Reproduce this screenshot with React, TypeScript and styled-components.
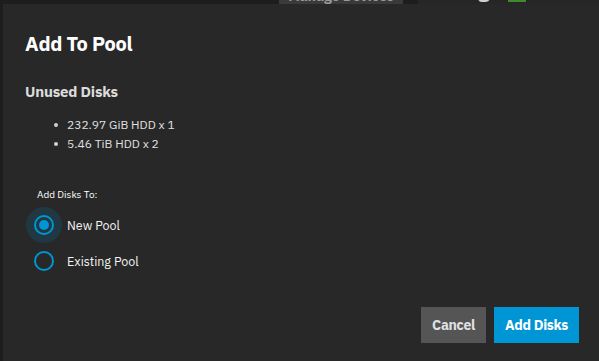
import React from "react";
import styled, { createGlobalStyle } from "styled-components";

const Global = createGlobalStyle`
  html, body { margin: 0; padding: 0; background: #1d1d1d; overflow: hidden; }
  body { font-family: "IBM Plex Sans", "Noto Sans", "Open Sans", sans-serif; }
  #root { width: 599px; height: 361px; }
`;

const Page = styled.div`
  position: relative;
  width: 599px;
  height: 361px;
  background: #1d1d1d;
  overflow: hidden;
`;

const PageHeader = styled.div`
  display: flex;
  align-items: flex-end;
  height: 4px;
  overflow: hidden;
  padding-left: 279px;
`;

const HeaderButton = styled.div`
  flex: none;
  width: 124px;
  height: 24px;
  margin-top: -20px;
  background: #3a3a3a;
  color: #9a9a9a;
  font-size: 14px;
  font-weight: 700;
  display: flex;
  align-items: flex-end;
  justify-content: center;
  line-height: 16px;
`;

const HeaderCard = styled.div`
  flex: none;
  margin-left: 15px;
  width: 181px;
  height: 30px;
  margin-top: -26px;
  background: #262626;
  display: flex;
  align-items: flex-end;
  gap: 7px;
  padding-left: 25px;
`;

const HeaderTitle = styled.div`
  color: #cfcfcf;
  font-size: 20px;
  font-weight: 700;
  line-height: 26px;
`;

const HeaderCheck = styled.div`
  width: 18px;
  height: 18px;
  background: #3e8a2c;
  margin-bottom: 2px;
`;

const Dialog = styled.div`
  position: absolute;
  top: 4px;
  left: 3px;
  right: 0;
  bottom: 0;
  background: #282828;
  display: flex;
  flex-direction: column;
  padding: 0 20px 18px 22px;
  color: #e6e6e6;
`;

const Title = styled.h2`
  margin: 26px 0 0 0;
  font-size: 20px;
  font-weight: 700;
  line-height: 28px;
  color: #ffffff;
  letter-spacing: -0.3px;
`;

const SectionTitle = styled.h3`
  margin: 23px 0 0 0;
  font-size: 15px;
  font-weight: 700;
  line-height: 22px;
  color: #dcdcdc;
  letter-spacing: -0.2px;
`;

const DiskList = styled.ul`
  margin: 12px 0 0 0;
  padding: 0 0 0 42px;
  list-style: none;
  display: flex;
  flex-direction: column;
`;

const DiskItem = styled.li`
  position: relative;
  font-size: 12px;
  line-height: 19px;
  color: #e0e0e0;
  &::before {
    content: "";
    position: absolute;
    left: -13px;
    top: 8px;
    width: 4px;
    height: 4px;
    border-radius: 50%;
    background: #d0d0d0;
  }
`;

const FieldLabel = styled.div`
  margin: 35px 0 0 12px;
  font-size: 10px;
  line-height: 14px;
  color: #ffffff;
`;

const RadioGroup = styled.div`
  display: flex;
  flex-direction: column;
  margin-top: 5px;
  padding-left: 1px;
`;

const RadioRow = styled.label`
  display: flex;
  align-items: center;
  height: 36px;
  gap: 5px;
  cursor: pointer;
`;

const RadioHalo = styled.span<{ $focused?: boolean }>`
  width: 36px;
  height: 36px;
  border-radius: 50%;
  display: flex;
  align-items: center;
  justify-content: center;
  background: ${(p) => (p.$focused ? "#203842" : "transparent")};
`;

const RadioOuter = styled.span`
  box-sizing: border-box;
  width: 20px;
  height: 20px;
  border-radius: 50%;
  border: 2px solid #0095d5;
  display: flex;
  align-items: center;
  justify-content: center;
`;

const RadioDot = styled.span`
  width: 10px;
  height: 10px;
  border-radius: 50%;
  background: #0095d5;
`;

const RadioText = styled.span`
  font-size: 12.5px;
  color: #f2f2f2;
`;

const Actions = styled.div`
  margin-top: auto;
  display: flex;
  justify-content: flex-end;
  gap: 8px;
`;

const Button = styled.button<{ $primary?: boolean }>`
  border: none;
  height: 36px;
  padding: 0 11px;
  font-family: inherit;
  font-size: 14px;
  font-weight: 700;
  letter-spacing: -0.3px;
  color: ${(p) => (p.$primary ? "#ffffff" : "#e0e0e0")};
  background: ${(p) => (p.$primary ? "#0095d5" : "#555555")};
  cursor: pointer;
`;

export default function App() {
  return (
    <>
      <Global />
      <Page>
        <PageHeader>
          <HeaderButton>Manage Devices</HeaderButton>
          <HeaderCard>
            <HeaderTitle>Usage</HeaderTitle>
            <HeaderCheck />
          </HeaderCard>
        </PageHeader>
        <Dialog>
          <Title>Add To Pool</Title>
          <SectionTitle>Unused Disks</SectionTitle>
          <DiskList>
            <DiskItem>232.97 GiB HDD x 1</DiskItem>
            <DiskItem>5.46 TiB HDD x 2</DiskItem>
          </DiskList>
          <FieldLabel>Add Disks To:</FieldLabel>
          <RadioGroup>
            <RadioRow>
              <RadioHalo $focused>
                <RadioOuter>
                  <RadioDot />
                </RadioOuter>
              </RadioHalo>
              <RadioText>New Pool</RadioText>
            </RadioRow>
            <RadioRow>
              <RadioHalo>
                <RadioOuter />
              </RadioHalo>
              <RadioText>Existing Pool</RadioText>
            </RadioRow>
          </RadioGroup>
          <Actions>
            <Button>Cancel</Button>
            <Button $primary>Add Disks</Button>
          </Actions>
        </Dialog>
      </Page>
    </>
  );
}
